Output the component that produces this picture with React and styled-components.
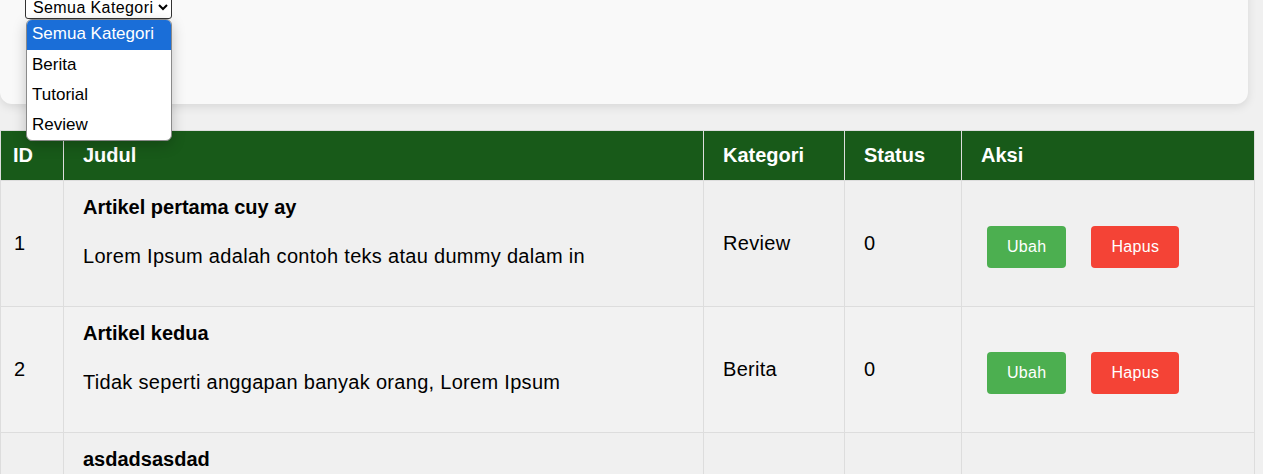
import React from "react"
import styled, { createGlobalStyle } from "styled-components"

const GlobalStyle = createGlobalStyle`
*{
  box-sizing:border-box;
}
body{
  margin:0;
  background-color:#f0f0f0;
  font-family:"Liberation Sans", Arial, sans-serif;
  color:#000;
  overflow:hidden;
}
`

const Page = styled.div`
width:1263px;
`

const FilterCard = styled.div`
position:relative;
width:1248px;
height:124px;
margin-top:-20px;
padding:16px 25px;
background-color:#f9f9f9;
border-radius:12px;
box-shadow:0 3px 10px rgba(0,0,0,0.1);
`

const SelectWrap = styled.div`
position:relative;
display:inline-block;
`

const Select = styled.select`
font-family:"Liberation Sans", Arial, sans-serif;
font-size:16px;
letter-spacing:0.4px;
height:23px;
width:147px;
padding:0 0 0 3px;
border:1px solid #333;
border-radius:3px;
background-color:#fff;
color:#000;
`

const OptionList = styled.ul`
position:absolute;
top:23px;
left:1px;
width:146px;
margin:0;
padding:0;
list-style:none;
background-color:#fff;
border:1px solid #8a8a8a;
border-radius:6px;
overflow:hidden;
box-shadow:0 4px 14px rgba(0,0,0,0.22);
z-index:10;
`

const OptionItem = styled.li`
height:30px;
line-height:${p => (p.$active ? "28px" : "30px")};
padding-left:5px;
font-size:17px;
color:${p => (p.$active ? "#fff" : "#000")};
background-color:${p => (p.$active ? "#1a6ed8" : "transparent")};
`

const Table = styled.table`
margin-top:26px;
width:1254px;
border-collapse:collapse;
table-layout:fixed;
`

const Th = styled.th`
background-color:#185a19;
color:#fff;
font-size:20px;
font-weight:bold;
text-align:left;
line-height:23px;
padding:13px ${p => (p.$first ? "12px" : "19px")};
border:1px solid #ddd;
`

const Row = styled.tr`
background-color:${p => (p.$even ? "#f2f2f2" : "#f0f0f0")};
`

const Td = styled.td`
font-size:20px;
line-height:23px;
letter-spacing:0.3px;
padding:15px ${p => (p.$first ? "13px" : "19px")};
border:1px solid #ddd;
vertical-align:middle;
`

const Title = styled.div`
font-weight:bold;
letter-spacing:0;
margin-bottom:26px;
`

const Excerpt = styled.div`
margin-bottom:23px;
white-space:nowrap;
overflow:hidden;
`

const Actions = styled.div`
display:flex;
gap:25px;
padding-left:6px;
margin-top:6px;
`

const Btn = styled.button`
font-family:"Liberation Sans", Arial, sans-serif;
font-size:16px;
letter-spacing:0.3px;
line-height:18px;
padding:12px 20px;
border:none;
border-radius:4px;
color:#fff;
background-color:${p => (p.$danger ? "#f44336" : "#4caf50")};
cursor:pointer;
`

const kategori = ["Semua Kategori", "Berita", "Tutorial", "Review"]

const artikel = [
  { id: 1, judul: "Artikel pertama cuy ay", isi: "Lorem Ipsum adalah contoh teks atau dummy dalam in", kategori: "Review", status: 0 },
  { id: 2, judul: "Artikel kedua", isi: "Tidak seperti anggapan banyak orang, Lorem Ipsum", kategori: "Berita", status: 0 },
  { id: 3, judul: "asdadsasdad", isi: "asdasdasd", kategori: "Tutorial", status: 0 },
]

export default function App() {
  return (
    <Page>
      <GlobalStyle />
      <FilterCard>
        <SelectWrap>
          <Select defaultValue="Semua Kategori">
            {kategori.map(k => (
              <option key={k}>{k}</option>
            ))}
          </Select>
          <OptionList>
            {kategori.map((k, i) => (
              <OptionItem key={k} $active={i === 0}>{k}</OptionItem>
            ))}
          </OptionList>
        </SelectWrap>
      </FilterCard>

      <Table>
        <colgroup>
          <col style={{ width: 63 }} />
          <col style={{ width: 640 }} />
          <col style={{ width: 141 }} />
          <col style={{ width: 117 }} />
          <col style={{ width: 293 }} />
        </colgroup>
        <thead>
          <tr>
            <Th $first>ID</Th>
            <Th>Judul</Th>
            <Th>Kategori</Th>
            <Th>Status</Th>
            <Th>Aksi</Th>
          </tr>
        </thead>
        <tbody>
          {artikel.map((a, i) => (
            <Row key={a.id} $even={i % 2 === 1}>
              <Td $first>{a.id}</Td>
              <Td>
                <Title>{a.judul}</Title>
                <Excerpt>{a.isi}</Excerpt>
              </Td>
              <Td>{a.kategori}</Td>
              <Td>{a.status}</Td>
              <Td>
                <Actions>
                  <Btn>Ubah</Btn>
                  <Btn $danger>Hapus</Btn>
                </Actions>
              </Td>
            </Row>
          ))}
        </tbody>
      </Table>
    </Page>
  )
}
